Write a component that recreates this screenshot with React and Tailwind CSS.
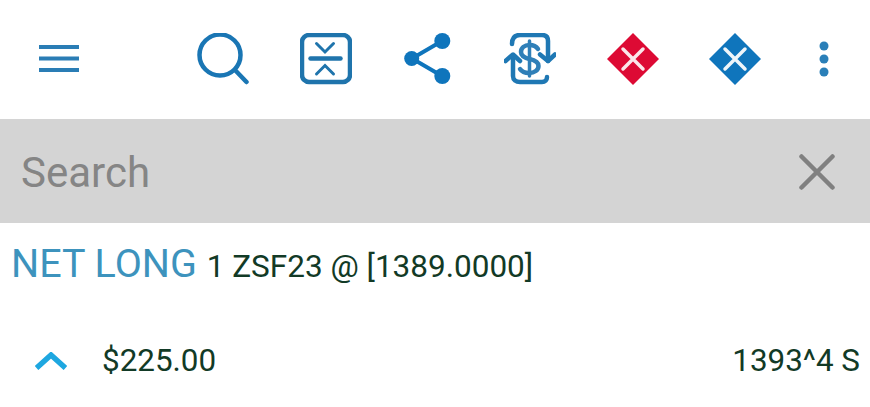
import React from 'react';

const Menu = () => (
  <svg width="40" height="28" viewBox="39 45 40 28" fill="none" stroke="#2a7db5" strokeWidth="4">
    <path d="M39 47h40M39 58.500h40M39 70h40" />
  </svg>
);

const Search = () => (
  <svg width="52" height="52" viewBox="197 33 52 52" fill="none" stroke="#1a76b4" strokeWidth="4.500" strokeLinecap="round">
    <circle cx="220" cy="55" r="20.500" />
    <path d="M235 70l11.500 12" />
  </svg>
);

const Collapse = () => (
  <svg width="52" height="52" viewBox="300 33 52 52" fill="none" stroke="#1f74ac" strokeWidth="4.500" strokeLinecap="round">
    <rect x="302" y="35" width="48" height="47" rx="7" />
    <path d="M310.500 58.500h30" />
    <path d="M316.500 43.500l8.500 8.500 8.500-8.500M316.500 74l8.500-8.500 8.500 8.500" strokeWidth="3" />
  </svg>
);

const Share = () => (
  <svg width="48" height="52" viewBox="404 33 48 52" fill="#0f75bc" stroke="#0f75bc">
    <path d="M442 41l-30 17.500 30 17.500" fill="none" strokeWidth="4" />
    <circle cx="411.700" cy="58.500" r="7.500" stroke="none" />
    <circle cx="442.300" cy="41" r="8" stroke="none" />
    <circle cx="442.300" cy="76" r="8" stroke="none" />
  </svg>
);

const Exchange = () => (
  <svg width="52" height="52" viewBox="505 33 52 52" fill="none" stroke="#1f78b4" strokeWidth="4.500" strokeLinecap="round" strokeLinejoin="round">
    <path d="M513 44c0-6 3-9 8-9h22c4 0 6 2 6 6v20" />
    <path d="M541 54.500l8 6.500 7-6.500" />
    <path d="M514 56v20c0 4 3 6 7 6h22c3 0 5-2 5-5" />
    <path d="M506.500 61l7.500-6.500 7 6.500" />
    <path d="M539 49c-2-3-5-4-8.500-4-5 0-8.500 3-8.500 7 0 4.500 4.500 6 8.500 7 5 1 9 3 9 7s-4 7-9.500 7c-4 0-7-1-9-4" strokeWidth="4.500" stroke="#2f7fb8" />
    <path d="M530.500 41v35" strokeWidth="3.500" stroke="#2f7fb8" />
  </svg>
);

const Diamond = ({ color, cross }) => (
  <svg width="52" height="52" viewBox="0 0 52 52">
    <path d="M26 0l26 26-26 26L0 26z" fill={color} />
    <path d="M16 16l20 20M36 16L16 36" stroke={cross} strokeWidth="3.500" strokeLinecap="round" />
  </svg>
);

const Dots = () => (
  <svg width="12" height="36" viewBox="0 0 12 36" fill="#2a7fb8">
    <circle cx="6" cy="5" r="4.500" />
    <circle cx="6" cy="18" r="4.500" />
    <circle cx="6" cy="31" r="4.500" />
  </svg>
);

export default function App() {
  return (
    <div className="w-[870px] h-[407px] bg-white overflow-hidden font-['Roboto',sans-serif]">
      <div className="h-[119px] flex items-center pl-[39px] pb-[2px]">
        <Menu />
        <div className="ml-[93px] flex items-center">
          <div className="w-[102.400px] flex justify-center"><Search /></div>
          <div className="w-[102.400px] flex justify-center"><Collapse /></div>
          <div className="w-[102.400px] flex justify-center"><Share /></div>
          <div className="w-[102.400px] flex justify-center"><Exchange /></div>
          <div className="w-[102.400px] flex justify-center"><Diamond color="#dd0a34" cross="#fbe6ea" /></div>
          <div className="w-[102.400px] flex justify-center"><Diamond color="#0f75bc" cross="#eef5fa" /></div>
        </div>
        <div className="ml-[32px]"><Dots /></div>
      </div>

      <div className="h-[104px] bg-[#d4d4d4] flex items-center justify-between pl-[21px] pr-[35px] pt-[2px]">
        <span className="text-[42px] text-[#858585]">Search</span>
        <svg width="36" height="36" viewBox="0 0 36 36" fill="none" stroke="#808080" strokeWidth="4.500" strokeLinecap="round">
          <path d="M2.500 2.500l31 31M33.500 2.500l-31 31" />
        </svg>
      </div>

      <div className="pl-[11px] pt-[17px] h-[118px] text-[#123a26] text-[31.500px] leading-[48px] whitespace-nowrap">
        <span className="text-[39.500px] text-[#3d93bd] mr-[2px]">NET LONG</span> 1 ZSF23 @ [1389.0000]
      </div>

      <div className="flex items-center pl-[35px] pr-[10px] text-[31.400px] leading-[40px] text-[#123a26]">
        <svg width="32" height="18" viewBox="0 0 32 18" fill="none" stroke="#1ea7e0" strokeWidth="5.500">
          <path d="M1.500 16L16 3l14.500 13" />
        </svg>
        <span className="ml-[35px]">$225.00</span>
        <span className="ml-auto">1393^4 S</span>
      </div>
    </div>
  );
}
